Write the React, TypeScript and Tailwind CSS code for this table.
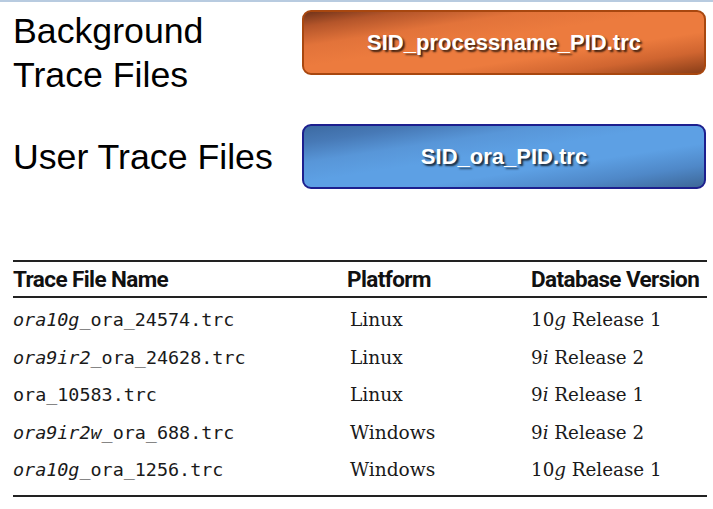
const rows = [
  { pre: "ora10g", rest: "_ora_24574.trc", platform: "Linux", ver: "10", verI: "g", rel: "Release 1" },
  { pre: "ora9ir2", rest: "_ora_24628.trc", platform: "Linux", ver: "9", verI: "i", rel: "Release 2" },
  { pre: "", rest: "ora_10583.trc", platform: "Linux", ver: "9", verI: "i", rel: "Release 1" },
  { pre: "ora9ir2w", rest: "_ora_688.trc", platform: "Windows", ver: "9", verI: "i", rel: "Release 2" },
  { pre: "ora10g", rest: "_ora_1256.trc", platform: "Windows", ver: "10", verI: "g", rel: "Release 1" },
];

function Pill({ label, tone }: { label: string; tone: "orange" | "blue" }) {
  const look =
    tone === "orange"
      ? "border-[#a8470f] bg-[linear-gradient(to_bottom_right,#70331a_0%,#b4552a_12%,#e2733a_28%,#ec7b3e_45%,#ec7b3e_66%,#d06530_82%,#8a3e18_100%)]"
      : "border-[#1d1f8e] bg-[linear-gradient(to_bottom_right,#3c6aa2_0%,#4779b6_14%,#5896d8_30%,#5da0e4_46%,#5da0e4_64%,#4f88c8_82%,#3d6797_100%)]";
  return (
    <div
      className={`w-[404px] h-[65px] rounded-[9px] border-2 flex items-center justify-center ${look}`}
    >
      <span className="text-white font-bold text-[22px] font-['Liberation_Sans',Arial,sans-serif] [text-shadow:2px_2px_2px_rgba(0,0,0,0.75)]">
        {label}
      </span>
    </div>
  );
}

export default function App() {
  return (
    <div className="w-[713px] h-[509px] bg-white overflow-hidden border-t-2 border-[#b8cbe0] text-black">
      {/* Top: labels + pills */}
      <div className="font-['Liberation_Sans',Arial,sans-serif] text-[35.7px] leading-[44px]">
        <div className="flex items-start pt-[7px]">
          <div className="w-[302px] pl-[13px]">
            Background
            <br />
            Trace Files
          </div>
          <div className="mt-[1px]">
            <Pill label="SID_processname_PID.trc" tone="orange" />
          </div>
        </div>
        <div className="flex items-center mt-[27px]">
          <div className="w-[302px] pl-[13px]">User Trace Files</div>
          <Pill label="SID_ora_PID.trc" tone="blue" />
        </div>
      </div>

      {/* Table */}
      <div className="ml-[13px] mr-[6px] mt-[71px] text-[#1a1a1a]">
        <div className="h-[2px] bg-[#222]" />
        <div className="grid grid-cols-[335px_183px_1fr] h-[34px] leading-[34px] font-['Roboto',sans-serif] font-bold text-[22.5px] tracking-[-0.6px] text-[#111]">
          <div>Trace File Name</div>
          <div className="-ml-[1px]">Platform</div>
          <div>Database Version</div>
        </div>
        <div className="h-[2px] bg-[#222]" />
        <div className="pt-[3px] pb-[6px]">
          {rows.map((r, i) => (
            <div key={i} className="grid grid-cols-[335px_183px_1fr] h-[37.5px] leading-[37.5px]">
              <div className="font-['DejaVu_Sans_Mono',monospace] text-[18.4px]">
                {r.pre && <span className="italic">{r.pre}</span>}
                {r.rest}
              </div>
              <div className="pl-[2px] font-['DejaVu_Serif',serif] text-[18.6px]">{r.platform}</div>
              <div className="font-['DejaVu_Serif',serif] text-[18.3px]">
                {r.ver}
                <span className="italic">{r.verI}</span> {r.rel}
              </div>
            </div>
          ))}
        </div>
        <div className="h-[2px] bg-[#222]" />
      </div>
    </div>
  );
}
